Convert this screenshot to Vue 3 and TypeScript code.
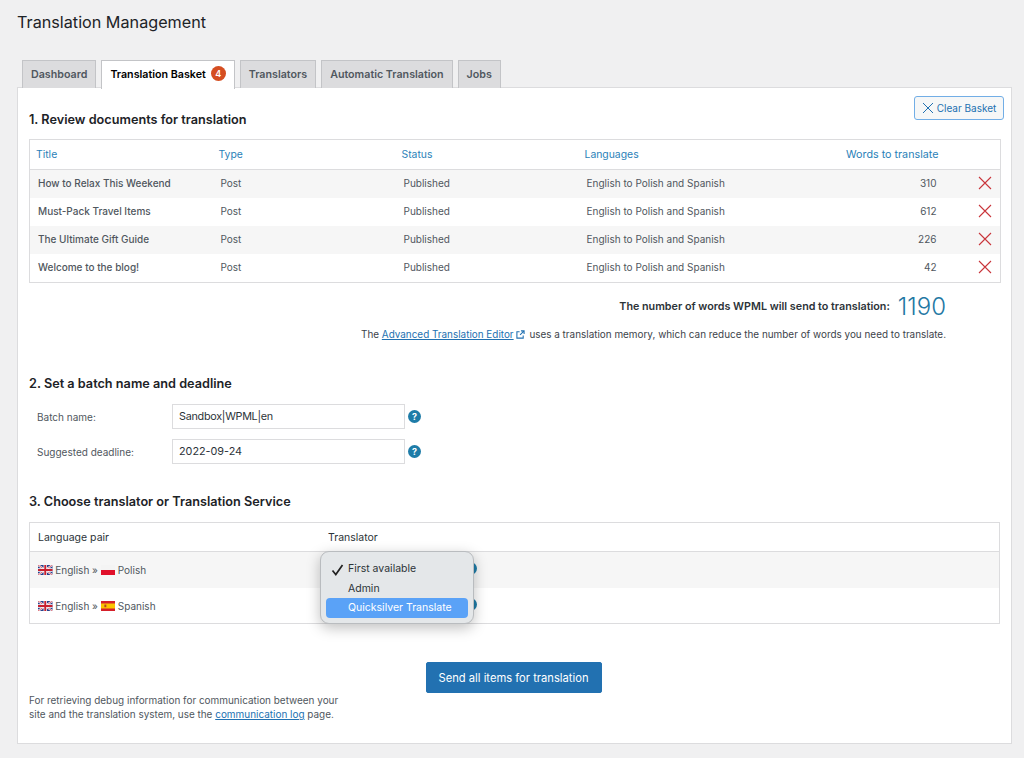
<script setup lang="ts">
interface Doc { title: string; words: number }
const docs: Doc[] = [
  { title: 'How to Relax This Weekend', words: 310 },
  { title: 'Must-Pack Travel Items', words: 612 },
  { title: 'The Ultimate Gift Guide', words: 226 },
  { title: 'Welcome to the blog!', words: 42 },
]
const tabs = ['Dashboard', 'Translation Basket', 'Translators', 'Automatic Translation', 'Jobs']
</script>

<template>
  <div class="page">
    <h1 class="title">Translation Management</h1>
    <div class="tabs">
      <div v-for="t in tabs" :key="t" class="tab" :class="{ active: t === 'Translation Basket' }">
        {{ t }}<span v-if="t === 'Translation Basket'" class="badge">4</span>
      </div>
    </div>
    <div class="panel">
      <button class="clear">
        <svg width="12" height="12" viewBox="0 0 12 12"><path d="M1 1l10 10M11 1L1 11" stroke="#2271b1" stroke-width="1" fill="none" /></svg>
        Clear Basket
      </button>
      <h2 class="h-first">1. Review documents for translation</h2>
      <table class="docs">
        <thead>
          <tr>
            <th class="c1">Title</th><th class="c2">Type</th><th class="c3">Status</th><th class="c4">Languages</th><th class="c5">Words to translate</th><th class="c6"></th>
          </tr>
        </thead>
        <tbody>
          <tr v-for="d in docs" :key="d.title">
            <td class="strong">{{ d.title }}</td>
            <td>Post</td>
            <td>Published</td>
            <td>English to Polish and Spanish</td>
            <td class="num">{{ d.words }}</td>
            <td class="del">
              <svg width="14" height="14" viewBox="0 0 14 14"><path d="M1 1l12 12M13 1L1 13" stroke="#c9353b" stroke-width="1.1" fill="none" /></svg>
            </td>
          </tr>
        </tbody>
      </table>
      <div class="total"><b>The number of words WPML will send to translation:</b><span class="count">1190</span></div>
      <p class="memory">
        The <a>Advanced Translation Editor</a>
        <svg class="ext" width="9" height="9" viewBox="0 0 10 10"><path d="M4 2H1v7h7V6M5.5 1H9v3.5M9 1L4.5 5.5" stroke="#2271b1" stroke-width="1.2" fill="none" /></svg>
        uses a translation memory, which can reduce the number of words you need to translate.
      </p>

      <h2 class="h-second">2. Set a batch name and deadline</h2>
      <div class="field">
        <label>Batch name:</label>
        <div class="input tight">Sandbox|WPML|en</div>
        <span class="help">?</span>
      </div>
      <div class="field">
        <label>Suggested deadline:</label>
        <div class="input">2022-09-24</div>
        <span class="help">?</span>
      </div>

      <h2 class="h-third">3. Choose translator or Translation Service</h2>
      <div class="pairs">
        <div class="pair-head"><span class="p1">Language pair</span><span>Translator</span></div>
        <div class="pair odd">
          <span class="p1 langs">
            <svg class="flag" viewBox="0 0 15 10" preserveAspectRatio="none"><rect width="15" height="10" fill="#27408b" /><path d="M0 0l15 10M15 0L0 10" stroke="#fff" stroke-width="2" /><path d="M0 0l15 10M15 0L0 10" stroke="#c8202f" stroke-width=".7" /><path d="M7.5 0v10M0 5h15" stroke="#fff" stroke-width="3.4" /><path d="M7.5 0v10M0 5h15" stroke="#c8202f" stroke-width="2" /></svg>
            English »
            <svg class="flag" viewBox="0 0 15 10" preserveAspectRatio="none"><rect width="15" height="5" fill="#f4f4f4" /><rect y="5" width="15" height="5" fill="#e0102a" /></svg>
            Polish
          </span>
          <span class="help peek">?</span>
        </div>
        <div class="pair">
          <span class="p1 langs">
            <svg class="flag" viewBox="0 0 15 10" preserveAspectRatio="none"><rect width="15" height="10" fill="#27408b" /><path d="M0 0l15 10M15 0L0 10" stroke="#fff" stroke-width="2" /><path d="M0 0l15 10M15 0L0 10" stroke="#c8202f" stroke-width=".7" /><path d="M7.5 0v10M0 5h15" stroke="#fff" stroke-width="3.4" /><path d="M7.5 0v10M0 5h15" stroke="#c8202f" stroke-width="2" /></svg>
            English »
            <svg class="flag" viewBox="0 0 15 10" preserveAspectRatio="none"><rect width="15" height="10" fill="#d5202a" /><rect y="2.5" width="15" height="5" fill="#fbc400" /><rect x="3.5" y="3.6" width="2" height="2.6" fill="#b5402a" /></svg>
            Spanish
          </span>
          <span class="help peek">?</span>
        </div>
        <div class="menu">
          <div class="item"><svg class="check" width="13" height="12" viewBox="0 0 13 12"><path d="M1.5 6.5L4.8 10.5 11.5 1" stroke="#222" stroke-width="1.7" fill="none" /></svg>First available</div>
          <div class="item">Admin</div>
          <div class="item selected">Quicksilver Translate</div>
        </div>
      </div>

      <div class="footer">
        <p class="debug">For retrieving debug information for communication between your site and the translation system, use the <a>communication log</a> page.</p>
        <button class="send">Send all items for translation</button>
      </div>
    </div>
  </div>
</template>

<style>
html, body { margin: 0; background: #f0f0f1; }
</style>

<style scoped>
.page {
  width: 1024px;
  height: 758px;
  box-sizing: border-box;
  padding: 0 12px 0 17px;
  background: #f0f0f1;
  font-family: Inter, "Liberation Sans", sans-serif;
  color: #3c434a;
  font-size: 10px;
  overflow: hidden;
}
.title {
  margin: 0;
  padding-top: 11px;
  height: 60px;
  box-sizing: border-box;
  font-size: 16.2px;
  line-height: 22px;
  font-weight: 400;
  color: #1d2327;
}
.tabs {
  display: flex;
  gap: 5px;
  padding-left: 5px;
  height: 28px;
  position: relative;
  z-index: 1;
}
.tab {
  box-sizing: border-box;
  height: 28px;
  line-height: 27px;
  padding: 0 8px;
  background: #dcdcde;
  border: 1px solid #c3c4c7;
  border-bottom: none;
  font-weight: 600;
  font-size: 10.7px;
  color: #50575e;
  white-space: nowrap;
}
.tab.active {
  background: #fff;
  color: #000;
  height: 29px;
}
.badge {
  display: inline-block;
  width: 15px;
  height: 15px;
  line-height: 15px;
  margin-left: 5px;
  border-radius: 50%;
  background: #d54e21;
  color: #fff;
  font-size: 9px;
  text-align: center;
  vertical-align: 1px;
}
.panel {
  position: relative;
  box-sizing: border-box;
  width: 995px;
  height: 657px;
  margin-top: -1px;
  padding: 0 11px;
  background: #fff;
  border: 1px solid #dcdcde;
}
.clear {
  position: absolute;
  top: 8px;
  right: 7px;
  width: 90px;
  height: 24px;
  padding: 0;
  display: flex;
  align-items: center;
  justify-content: center;
  gap: 3px;
  background: #f6f7f7;
  border: 1px solid #72aee6;
  border-radius: 3px;
  color: #2271b1;
  font: 400 10px Inter, "Liberation Sans", sans-serif;
}
h2 {
  margin: 0;
  font-size: 12.7px;
  line-height: 18px;
  font-weight: 600;
  color: #1d2327;
}
.h-first { padding-top: 23px; height: 51px; box-sizing: border-box; }
.docs {
  width: 971px;
  table-layout: fixed;
  border-collapse: collapse;
  border: 1px solid #dcdcde;
}
.docs th, .docs td { box-sizing: border-box; }
.docs th {
  height: 30px;
  padding: 0 0 0 6px;
  text-align: left;
  font-weight: 400;
  font-size: 10.4px;
  color: #2a7fb8;
  border-bottom: 1px solid #dcdcde;
}
.c1, .c2, .c3, .c4 { width: 183px; }
.docs th.c5 { width: 180px; padding: 0 3px 0 0; text-align: right; font-size: 10.75px; }
.c6 { width: 59px; }
.docs td {
  height: 28px;
  padding: 0 0 1px 8px;
  color: #50575e;
}
.docs tbody tr:last-child td { height: 29px; padding-bottom: 2px; }
.docs tbody tr:nth-child(odd) { background: #f6f6f6; }
.docs td.strong { font-weight: 500; }
.docs td.num { text-align: right; padding-right: 5px; }
.docs td.del { padding-left: 36px; }
.docs td.del svg { display: block; }
.total {
  display: flex;
  justify-content: flex-end;
  align-items: center;
  gap: 8px;
  height: 24px;
  margin-top: 11px;
  padding-right: 54px;
  font-size: 10.75px;
  color: #2c3338;
}
.total b { font-weight: 600; }
.count {
  font-size: 24px;
  color: #1f78a4;
  font-weight: 300;
}
.memory {
  margin: 9px 0 0;
  padding-right: 54px;
  text-align: right;
  line-height: 14px;
  font-size: 9.92px;
}
a { color: #2271b1; text-decoration: underline; }
.ext { margin: 0 2px 2px 2px; vertical-align: middle; }
.h-second { margin-top: 34px; height: 29px; }
.field {
  display: flex;
  align-items: center;
  height: 25px;
  margin-bottom: 10px;
  padding-left: 8px;
  color: #50575e;
}
.field label { width: 135px; }
.input {
  box-sizing: border-box;
  width: 233px;
  height: 25px;
  line-height: 23px;
  padding-left: 6px;
  border: 1px solid #dcdcde;
  font-size: 10.8px;
  color: #2c3338;
}
.input.tight { letter-spacing: -.27px; }
.help {
  display: inline-block;
  width: 13px;
  height: 13px;
  line-height: 13px;
  margin-left: 3px;
  border-radius: 50%;
  background: #1e7ca8;
  color: #fff;
  font-size: 9px;
  font-weight: 700;
  text-align: center;
}
.h-third { margin-top: 29px; height: 29px; }
.pairs {
  position: relative;
  box-sizing: border-box;
  width: 971px;
  height: 102px;
  border: 1px solid #dcdcde;
}
.pair-head {
  display: flex;
  align-items: center;
  height: 28px;
  border-bottom: 1px solid #dcdcde;
  font-size: 10.5px;
  color: #2c3338;
}
.p1 { width: 298px; padding-left: 8px; box-sizing: border-box; }
.pair {
  position: relative;
  display: flex;
  align-items: center;
  height: 36px;
  color: #50575e;
}
.pair.odd { background: #f6f6f6; }
.langs { display: block; word-spacing: -.1px; }
.flag { width: 14.5px; height: 10px; vertical-align: -1px; }
.peek { position: absolute; left: 434px; top: 10px; margin: 0; }
.menu {
  position: absolute;
  left: 290px;
  top: 28px;
  box-sizing: border-box;
  width: 154px;
  height: 73px;
  padding: 7px 5px;
  background: #e4e7e9;
  border: 1px solid #b9bcbf;
  border-radius: 9px;
  box-shadow: 0 4px 14px rgba(0, 0, 0, .25);
  font-size: 10.5px;
}
.item {
  position: relative;
  height: 20px;
  line-height: 20px;
  padding-left: 22px;
  border-radius: 4px;
  color: #2c3338;
}
.item.selected { background: #5aa2f7; color: #fff; margin-top: -1px; }
.check { position: absolute; left: 5px; top: 5px; }
.footer {
  position: relative;
  display: flex;
  justify-content: center;
  padding: 38px 2px 0 0;
}
.send {
  width: 176px;
  height: 31px;
  padding: 0;
  background: #2271b1;
  border: 1px solid #2271b1;
  border-radius: 2px;
  color: #fff;
  font: 400 11.2px Inter, "Liberation Sans", sans-serif;
}
.debug {
  position: absolute;
  left: 0;
  top: 69px;
  width: 320px;
  margin: 0;
  line-height: 14px;
  font-size: 9.95px;
  color: #50575e;
}
</style>
